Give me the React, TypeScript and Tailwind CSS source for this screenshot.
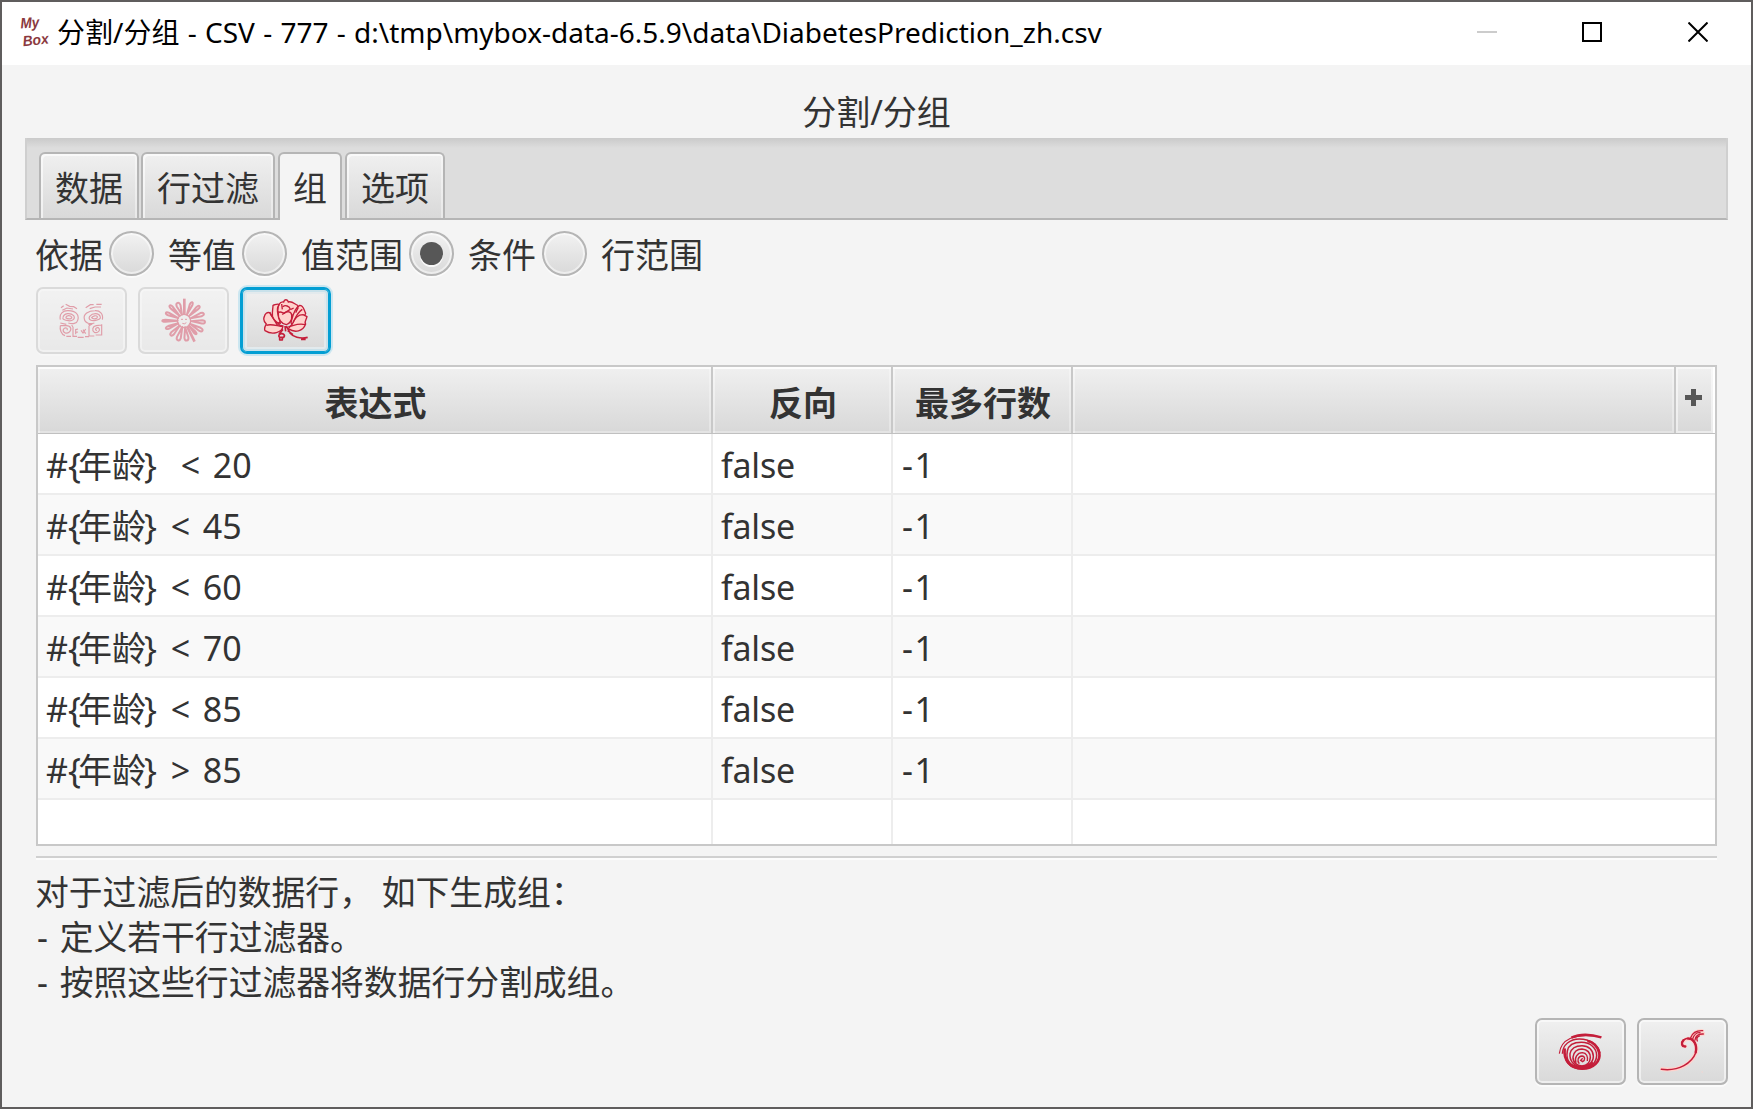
import React from "react";

const RED = "#c41e3a";
const PINK = "#ffd2cc";

const rows = [
  { gap: "ml-[22px]", op: "<", value: "20" },
  { gap: "ml-[12px]", op: "<", value: "45" },
  { gap: "ml-[12px]", op: "<", value: "60" },
  { gap: "ml-[12px]", op: "<", value: "70" },
  { gap: "ml-[12px]", op: "<", value: "85" },
  { gap: "ml-[12px]", op: ">", value: "85" },
];

function AppLogo() {
  return (
    <svg className="-mt-[4px] h-[44px] w-[34px] overflow-visible" viewBox="0 0 34 44" fill="#8b3a40">
      <g fontFamily="Liberation Sans" fontStyle="italic" fontWeight="bold">
        <text x="1.5" y="20" fontSize="15" textLength="19" lengthAdjust="spacingAndGlyphs" transform="rotate(-4 10 18)">My</text>
        <text x="4" y="37" fontSize="14.5" textLength="26" lengthAdjust="spacingAndGlyphs" transform="rotate(-6 16 36)">Box</text>
      </g>
    </svg>
  );
}

function MaskIcon() {
  return (
    <svg className="h-[36px] w-[45px]" viewBox="0 0 135 108" fill="none" stroke={RED} strokeWidth="3.5">
      <path d="M6 14 L14 8 M20 4 L32 10 L44 11 L54 17 M10 22 L24 15 L42 18 M80 14 L94 5 L104 5 M112 4 H128 M92 17 L108 12 H126" />
      <path d="M4 50 C0 32 12 22 28 23 C50 24 62 34 56 52 C54 62 40 64 28 60 M12 44 C14 30 34 28 44 38 C50 48 40 55 28 53 C16 52 10 48 12 44 M20 44 C22 36 34 36 38 42 C40 48 28 50 20 44 M4 60 L22 64" />
      <path d="M130 50 C134 32 122 22 108 23 C88 23 72 34 76 48 C78 62 94 64 106 60 M124 42 C120 28 100 30 92 40 C86 50 98 55 110 52 C120 50 126 46 124 42 M116 42 C112 36 102 38 98 44 C102 50 114 48 116 42 M88 64 H100" />
      <path d="M4 68 C2 78 6 94 18 98 M4 68 H22 C36 68 40 80 30 88 C22 94 10 88 13 79 C18 72 28 74 24 82 M22 100 H36 M42 72 V100 H54 M42 72 L38 66 M50 78 V94 M57 78 L50 80 M57 87 L50 88 M56 103 H74" />
      <path d="M128 64 V96 H110 M128 66 L112 68 C100 70 98 82 106 88 C118 92 126 80 118 74 C110 72 106 82 114 82 M90 68 V99 H106 M90 68 L98 64 M66 82 L72 90 L80 78 M72 80 L80 92 M78 101 H90" />
    </svg>
  );
}

const petals = [
  { a: 0, r: 62, loop: 0 }, { a: 23, r: 60, loop: 4 }, { a: 46, r: 63, loop: 4 },
  { a: 70, r: 62, loop: 5 }, { a: 94, r: 62, loop: 5 }, { a: 119, r: 62, loop: 5 },
  { a: 138, r: 54, loop: 3 }, { a: 154, r: 66, loop: 0 }, { a: 173, r: 60, loop: 6 },
  { a: 198, r: 62, loop: 6 }, { a: 223, r: 60, loop: 5 }, { a: 247, r: 60, loop: 4 },
  { a: 270, r: 66, loop: 3 }, { a: 293, r: 60, loop: 4 }, { a: 316, r: 63, loop: 4 },
  { a: 339, r: 57, loop: 6 },
];

function FlowerIcon() {
  return (
    <svg className="size-[45px]" viewBox="0 0 135 135" fill="none" stroke={RED}>
      {petals.map((p) => (
        <g key={p.a} transform={`translate(70 68) rotate(${p.a})`}>
          {p.loop === 0 ? (
            <path d={`M0 -20 V-${p.r + 4}`} strokeWidth="8" />
          ) : (
            <path
              d={`M0 -20 L${p.loop} -${p.r - 9} Q${p.loop} -${p.r} 0 -${p.r} Q-${p.loop} -${p.r} -${p.loop} -${p.r - 9} Z`}
              strokeWidth="6"
              strokeLinejoin="round"
            />
          )}
        </g>
      ))}
      <circle cx="69" cy="69" r="20" strokeWidth="4" />
      <path d="M60 64 H66 M72 64 H78 M64 76 Q70 80 76 74" strokeWidth="3" />
    </svg>
  );
}

function RoseIcon() {
  return (
    <svg className="size-[45px]" viewBox="0 0 135 135" fill={PINK} stroke={RED} strokeWidth="4" strokeLinejoin="round">
      <path d="M44 40 C44 22 50 10 62 12 C64 2 74 4 76 12 C88 8 96 20 104 22 L104 46 L66 60 Z" />
      <path d="M32 70 C24 50 30 36 30 22 C38 20 44 16 48 20 L44 28 C40 44 48 56 52 76 Z" />
      <path d="M84 74 C88 58 92 32 110 22 C122 22 122 34 128 46 C124 60 108 76 88 82 Z" />
      <path d="M88 78 C96 58 108 50 120 50 L132 56 C130 66 122 74 128 78 C120 100 96 106 76 92 Z" />
      <path d="M4 56 C6 46 12 42 20 44 C26 54 34 66 42 80 L60 84 C58 104 28 112 6 98 C2 90 8 82 10 78 C2 70 0 64 4 56 Z" />
      <path d="M20 42 C26 56 36 70 50 80 M118 34 C102 44 96 62 90 74 M10 82 C24 76 42 84 60 86 M126 80 C106 74 90 84 76 86 M106 28 L98 44" fill="none" />
      <path d="M46 46 C48 38 58 44 64 46 C72 38 86 40 86 52 C88 68 78 78 70 80 C56 78 44 64 46 46 Z" />
      <path d="M60 26 C66 20 80 24 82 34 C74 40 64 42 58 50 M84 34 L92 30 M56 18 L58 34" fill="none" />
      <path d="M66 84 L68 100 M70 84 L80 102 M60 94 L48 108 M80 104 C90 116 110 124 134 118 M58 106 C50 106 44 114 50 118 H62 C68 112 60 104 52 108 M50 118 V126 H58 V118 M74 98 L90 110 M114 124 H128" fill="none" strokeWidth="5" />
    </svg>
  );
}

function SpiralIcon() {
  return (
    <svg className="h-[38px] w-[45px]" viewBox="0 0 135 114" fill="none" stroke={RED}>
      <path d="M4 62 C8 22 44 -2 130 12" strokeWidth="3.5" />
      <path d="M40 14 C66 2 100 4 130 13" strokeWidth="7" />
      <path d="M13 62 C14 36 36 18 64 18 C96 18 120 34 126 60" strokeWidth="4" />
      <path d="M20 46 C16 84 38 106 72 107 C108 107 128 84 124 60 C120 40 104 26 88 24" strokeWidth="8" />
      <path d="M28 54 C32 34 52 28 70 28 C98 28 116 46 116 68 C114 92 98 104 72 104 C40 104 22 84 28 54 Z" strokeWidth="4.5" />
      <path d="M36 62 C40 44 54 38 72 38 C92 38 106 52 106 70 C106 88 90 102 70 102 C48 100 34 84 36 62 Z" strokeWidth="4.5" />
      <path d="M45 72 C48 54 60 48 72 48 C90 50 97 60 97 74 C96 90 86 98 72 99 C56 98 44 88 45 72 Z" strokeWidth="4.5" />
      <path d="M54 90 C48 74 58 59 73 59 C86 60 90 70 88 84" strokeWidth="4" />
      <path d="M64 92 C56 84 60 70 72 69 C82 70 82 82 74 86 L68 82 L74 76" strokeWidth="4" />
      <path d="M24 82 C34 92 40 96 52 98 C68 102 88 100 104 88 C110 92 92 106 74 108 C50 110 30 98 24 82 Z" fill={RED} strokeWidth="3" />
    </svg>
  );
}

function TailIcon() {
  return (
    <svg className="size-[45px]" viewBox="0 0 135 135" fill="none" strokeLinecap="round">
      <g stroke={PINK} strokeWidth="12">
        <path d="M6 120 C60 128 96 102 108 70 C114 44 94 22 76 32 C64 38 64 52 76 52" />
        <path d="M94 28 C98 14 110 6 126 6 M106 32 C108 20 116 14 130 14" />
      </g>
      <path d="M4 121 C58 128 96 102 108 70 C114 44 94 22 76 30 C62 36 64 52 76 53" stroke={RED} strokeWidth="4.5" />
      <path d="M84 29 C102 28 112 48 107 70 M70 34 C62 42 66 54 76 52" stroke={RED} strokeWidth="7" />
      <path d="M92 26 C98 10 110 4 128 5 M98 30 C102 16 112 10 120 11 M105 33 C107 20 116 14 130 15 M112 36 C108 28 112 24 118 21" stroke={RED} strokeWidth="4" />
      <path d="M126 129 H127" stroke={PINK} strokeWidth="3" />
    </svg>
  );
}

function IconButton({ children, disabled = false, focused = false }: { children: React.ReactNode; disabled?: boolean; focused?: boolean }) {
  return (
    <button
      className={
        "flex h-[67px] w-[91px] items-center justify-center rounded-[7px] border-2 bg-linear-to-b from-[#f0f0f0] to-[#d9d9d9] " +
        (focused
          ? "border-[#039ed3] shadow-[0_0_0_2px_#cbe6f0,inset_0_0_0_1px_#039ed3,inset_0_0_0_3px_#c9e1ea,inset_0_0_0_5px_#e3eaed]"
          : "border-[#b5b5b5] shadow-[inset_0_0_0_2px_rgba(255,255,255,0.55),0_2px_0_#fbfbfb]") +
        (disabled ? " opacity-40" : "")
      }
    >
      {children}
    </button>
  );
}

function Radio({ selected = false }: { selected?: boolean }) {
  return (
    <span className="flex size-[45px] shrink-0 items-center justify-center rounded-full border-2 border-[#b5b5b5] bg-linear-to-b from-[#f2f2f2] to-[#d9d9d9] shadow-[inset_0_0_0_2px_rgba(255,255,255,0.5),0_2px_0_#fbfbfb]">
      {selected && <span className="size-[23px] rounded-full bg-[#575757] shadow-[0_2px_0_#f8f8f8]" />}
    </span>
  );
}

function Tab({ label, width }: { label: string; width: string }) {
  return (
    <div className={"flex h-[66px] items-center justify-center rounded-t-[6px] border-2 border-b-0 border-[#b5b5b5] bg-linear-to-b from-[#f0f0f0] to-[#d9d9d9] pt-[4px] shadow-[inset_2px_2px_0_rgba(255,255,255,0.6),inset_-2px_0_0_rgba(255,255,255,0.4)] " + width}>
      {label}
    </div>
  );
}

function HeaderCell({ children, width }: { children?: React.ReactNode; width: string }) {
  return (
    <div className={"flex h-full shrink-0 items-center justify-center border-r-2 border-[#c8c8c8] bg-linear-to-b from-[#f0f0f0] to-[#d8d8d8] pt-[6px] pl-[2px] font-bold shadow-[inset_0_2px_0_#fcfcfc,inset_2px_0_0_rgba(255,255,255,0.4),inset_-2px_-2px_0_rgba(255,255,255,0.3)] " + width}>
      {children}
    </div>
  );
}

export default function App() {
  return (
    <div className="flex h-[1109px] w-[1753px] flex-col overflow-hidden border-2 border-[#5f5d5d] bg-[#f4f4f4] font-['Noto_Sans','Noto_Sans_CJK_SC',sans-serif] text-[34px] leading-[45px] whitespace-pre text-[#333333]">
      <header className="flex h-[63px] shrink-0 items-center bg-white pb-[3px] text-black">
        <div className="ml-[17px] flex w-[38px] shrink-0">
          <AppLogo />
        </div>
        <h1 className="text-[28px] [word-spacing:1px]">
          分割/分组 - CSV - 777 - d:\tmp\mybox-data-6.5.9\data\DiabetesPrediction_zh.csv
        </h1>
        <div className="mr-[43px] ml-auto flex items-center">
          <span className="mr-[85px] h-[2px] w-[20px] bg-[#cccccc]" />
          <span className="mr-[86px] size-[20px] border-2 border-black" />
          <svg className="size-[20px]" viewBox="0 0 20 20" stroke="#000" strokeWidth="2">
            <path d="M0.5 0.5 L19.5 19.5 M19.5 0.5 L0.5 19.5" />
          </svg>
        </div>
      </header>

      <main className="flex grow flex-col">
        <h2 className="mt-[25px] flex h-[45px] justify-center">分割/分组</h2>

        <nav className="mt-[3px] mr-[23px] ml-[23px] flex h-[82px] shrink-0 items-end border-x-2 border-b-2 border-x-[#cfcfcf] border-b-[#b5b5b5] bg-[#dddddd] bg-[linear-gradient(to_bottom,#cacaca,#dddddd_10px)] pl-[12px]">
          <Tab label="数据" width="mr-[2px] w-[100px]" />
          <Tab label="行过滤" width="mr-[3px] w-[134px]" />
          <div className="-mb-[2px] mr-[3px] flex h-[68px] w-[64px] items-start justify-center rounded-t-[6px] border-2 border-b-0 border-[#b5b5b5] bg-[#f4f4f4] pt-[12px]">
            组
          </div>
          <Tab label="选项" width="w-[100px]" />
        </nav>

        <section className="flex flex-col pr-[34px] pl-[34px]">
          <div className="mt-[11px] flex h-[45px] items-center">
            <span className="-ml-px w-[74px] pt-[3px]">依据</span>
            <Radio />
            <span className="w-[88px] pt-[3px] pl-[14px]">等值</span>
            <Radio />
            <span className="w-[122px] pt-[3px] pl-[14px]">值范围</span>
            <Radio selected />
            <span className="w-[88px] pt-[3px] pl-[14px]">条件</span>
            <Radio />
            <span className="pt-[3px] pl-[14px]">行范围</span>
          </div>

          <div className="mt-[11px] flex gap-[11px]">
            <IconButton disabled><MaskIcon /></IconButton>
            <IconButton disabled><FlowerIcon /></IconButton>
            <IconButton focused><RoseIcon /></IconButton>
          </div>

          <div className="mt-[11px] flex h-[481px] w-[1681px] flex-col overflow-hidden border-2 border-[#c8c8c8] bg-white">
            <div className="flex h-[67px] shrink-0 border-b border-[#c0c0c0]">
              <HeaderCell width="w-[675px]">表达式</HeaderCell>
              <HeaderCell width="w-[180px]">反向</HeaderCell>
              <HeaderCell width="w-[180px]">最多行数</HeaderCell>
              <HeaderCell width="w-[603px]" />
              <div className="flex h-full w-[37px] justify-center bg-linear-to-b from-[#f0f0f0] to-[#d8d8d8] pt-[22px] pr-[2px] shadow-[inset_0_0_0_2px_rgba(255,255,255,0.5)]">
                <svg className="size-[17px]" viewBox="0 0 17 17">
                  <path d="M6 0 H11 V6 H17 V11 H11 V17 H6 V11 H0 V6 H6 Z" fill="#575757" />
                </svg>
              </div>
            </div>
            {rows.map((r, i) => (
              <div key={i} className="flex h-[61px] shrink-0 border-b-2 border-[#ededed] odd:bg-[#f9f9f9]">
                <div className="flex w-[675px] items-center border-r-2 border-[#ededed] pt-[3px] pl-[8px]">
                  <span>{"#{"}</span>
                  <span className="-ml-[3px]">年龄</span>
                  <span className="mr-[2px] -ml-[2px]">{"}"}</span>
                  <span className={"w-[32px] " + r.gap}>{r.op}</span>
                  <span>{r.value}</span>
                </div>
                <div className="flex w-[180px] items-center border-r-2 border-[#ededed] pt-[3px] pl-[8px] tracking-[-0.2px]">false</div>
                <div className="flex w-[180px] items-center border-r-2 border-[#ededed] pt-[3px] pl-[9px] tracking-[1.5px]">-1</div>
              </div>
            ))}
            <div className="flex grow">
              <div className="w-[675px] border-r-2 border-[#ededed]" />
              <div className="w-[180px] border-r-2 border-[#ededed]" />
              <div className="w-[180px] border-r-2 border-[#ededed]" />
            </div>
          </div>

          <div className="mt-[10px] h-[4px] w-[1681px] border-y-2 border-t-[#d0d0d0] border-b-[#fcfcfc]" />

          <div className="mt-[10px] -ml-px flex flex-col text-[33.8px]">
            <p>对于过滤后的数据行， 如下生成组：</p>
            <p className="pl-[2px] [word-spacing:3px]">- 定义若干行过滤器。</p>
            <p className="pl-[2px] [word-spacing:3px]">- 按照这些行过滤器将数据行分割成组。</p>
          </div>
        </section>

        <footer className="mt-auto mr-[23px] mb-[22px] flex justify-end gap-[11px]">
          <IconButton><SpiralIcon /></IconButton>
          <IconButton><TailIcon /></IconButton>
        </footer>
      </main>
    </div>
  );
}
